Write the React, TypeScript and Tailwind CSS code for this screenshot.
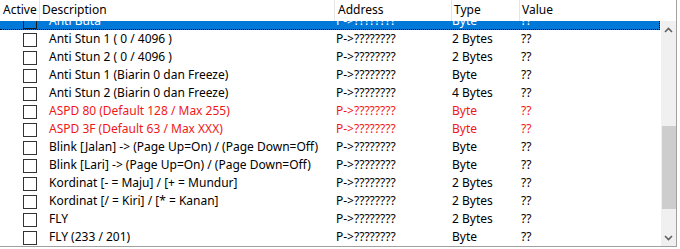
import React from 'react';

type Row = { desc: string; type: string; red?: boolean };

const rows: Row[] = [
  { desc: 'Anti Buta', type: 'Byte' },
  { desc: 'Anti Stun 1 ( 0 / 4096 )', type: '2 Bytes' },
  { desc: 'Anti Stun 2 ( 0 / 4096 )', type: '2 Bytes' },
  { desc: 'Anti Stun 1 (Biarin 0 dan Freeze)', type: 'Byte' },
  { desc: 'Anti Stun 2 (Biarin 0 dan Freeze)', type: '4 Bytes' },
  { desc: 'ASPD 80 (Default 128 / Max 255)', type: 'Byte', red: true },
  { desc: 'ASPD 3F (Default 63 / Max XXX)', type: 'Byte', red: true },
  { desc: 'Blink [Jalan] -> (Page Up=On) / (Page Down=Off)', type: 'Byte' },
  { desc: 'Blink [Lari] -> (Page Up=On) / (Page Down=Off)', type: 'Byte' },
  { desc: 'Kordinat [- = Maju] / [+ = Mundur]', type: '2 Bytes' },
  { desc: 'Kordinat [/ = Kiri] / [* = Kanan]', type: '2 Bytes' },
  { desc: 'FLY', type: '2 Bytes' },
  { desc: 'FLY (233 / 201)', type: 'Byte' },
];

function Chevron({ up }: { up?: boolean }) {
  return (
    <svg width="9" height="6" viewBox="0 0 9 6" className="block">
      <path
        d={up ? 'M1 5 L4.5 1.5 L8 5' : 'M1 1 L4.5 4.5 L8 1'}
        fill="none"
        stroke="#606060"
        strokeWidth="1.6"
      />
    </svg>
  );
}

export default function App() {
  return (
    <div
      className="w-[680px] h-[249px] bg-white overflow-hidden text-[12px] text-black"
      style={{ fontFamily: '"Noto Sans", sans-serif' }}
    >
      <div className="w-[677px] h-[247px] border-r border-b border-[#a0a0a0] flex flex-col">
        {/* header */}
        <div className="h-[21px] flex items-stretch shrink-0 leading-[20px]">
          <div className="w-[40px] pl-[3px] border-r border-[#e5e5e5]">Active</div>
          <div className="w-[295px] pl-[2px] border-r border-[#e5e5e5]">Description</div>
          <div className="w-[117px] pl-[3px] border-r border-[#e5e5e5]">Address</div>
          <div className="w-[68px] pl-[2px] border-r border-[#e5e5e5]">Type</div>
          <div className="flex-1 pl-[2px]">Value</div>
        </div>
        {/* body */}
        <div className="flex flex-1 min-h-0">
          <div className="w-[661px] overflow-hidden">
            <div className="-mt-[9px]">
              {rows.map((r, i) => {
                const sel = i === 0;
                return (
                  <div
                    key={i}
                    className={
                      'h-[18px] flex leading-[18px] ' +
                      (sel
                        ? 'bg-[#0078d7] text-white border-b border-r border-dotted border-black w-[660px]'
                        : r.red
                        ? 'text-[#f01818]'
                        : '')
                    }
                  >
                    <div className="w-[49px] pl-[23px] pt-[3px] shrink-0">
                      <div
                        className={
                          'w-[14px] h-[14px] border ' +
                          (sel ? 'border-[#1a1a1a]' : 'border-[#333] bg-white')
                        }
                      />
                    </div>
                    <div className="w-[287px] shrink-0 whitespace-nowrap">{r.desc}</div>
                    <div className="w-[116px] shrink-0">P-&gt;????????</div>
                    <div className="w-[69px] shrink-0">{r.type}</div>
                    <div>??</div>
                  </div>
                );
              })}
            </div>
          </div>
          {/* scrollbar */}
          <div className="w-[15px] bg-[#f0f0f0] flex flex-col items-center">
            <div className="h-[17px] flex items-center justify-center">
              <Chevron up />
            </div>
            <div className="h-[88px]" />
            <div className="w-[14px] h-[83px] bg-[#cdcdcd]" />
            <div className="flex-1" />
            <div className="h-[17px] flex items-center justify-center">
              <Chevron />
            </div>
          </div>
        </div>
      </div>
    </div>
  );
}
